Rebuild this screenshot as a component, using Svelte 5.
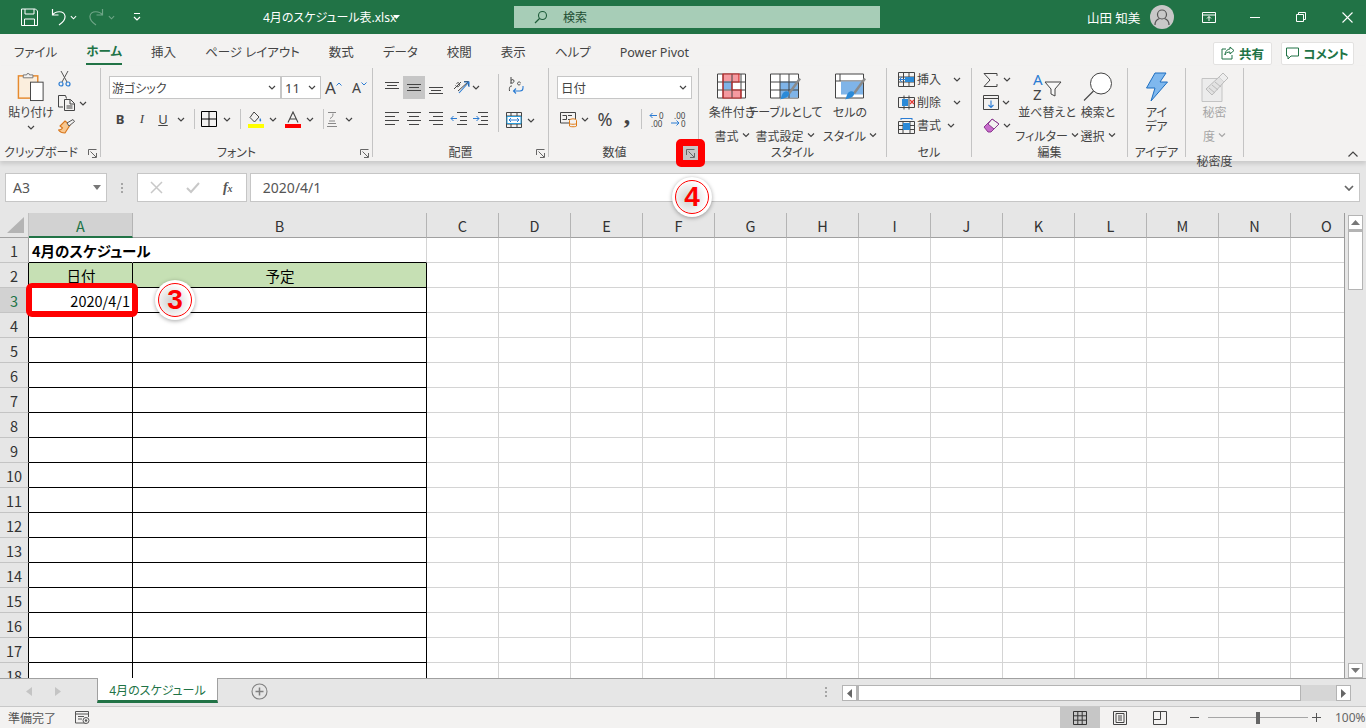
<script>
	const columns = ["A", "B", "C", "D", "E", "F", "G", "H", "I", "J", "K", "L", "M", "N", "O"]
	const rows = Array.from({ length: 18 }, (_, i) => i + 1)
	const tabs = ["ファイル", "ホーム", "挿入", "ページ レイアウト", "数式", "データ", "校閲", "表示", "ヘルプ", "Power Pivot"]

	function cellClass(row, col) {
		let names = "cell"
		if (col < 2) {
			if (row == 1) names += col == 0 ? " noright blackbottom" : " blackbottom"
			else names += " black"
		}
		if (row == 2 && col < 2) names += " head"
		return names
	}

	function cellText(row, col) {
		if (row == 1 && col == 0) return "4月のスケジュール"
		if (row == 2 && col == 0) return "日付"
		if (row == 2 && col == 1) return "予定"
		if (row == 3 && col == 0) return "2020/4/1"
		return ""
	}
</script>

{#snippet chev(cls = "")}
	<svg class="chev {cls}" width="8" height="5" viewBox="0 0 8 5"><path d="M1 1l3 3 3-3" fill="none" stroke="currentColor" stroke-width="1.2"/></svg>
{/snippet}

{#snippet launcher()}
	<svg width="9" height="9" viewBox="0 0 9 9"><path d="M.5 6V.5H8.500M2.500 2.500l5.500 5.500M8.500 4v4.500H4" fill="none" stroke="#666" stroke-width="1"/></svg>
{/snippet}

{#snippet lines(rowsOf)}
	<svg width="14" height="15" viewBox="0 0 14 15">
		{#each rowsOf as l}
			<path d="M{l[0]} {l[2]}.5H{l[1]}" stroke="#444" stroke-width="1"/>
		{/each}
	</svg>
{/snippet}

{#snippet launcherRow(title, cls = "")}
	<div class="glabel {cls}"><span>{title}</span><span class="launch">{@render launcher()}</span></div>
{/snippet}

<div class="app">
	<header class="titlebar">
		<svg class="save" width="17" height="18" viewBox="0 0 17 18"><path d="M.5 1h14l2 2v14.500H.500zM4 1v5h9V1M3.500 17.500V11h10v6.500" fill="none" stroke="#fff"/></svg>
		<svg class="undo" width="15" height="18" viewBox="0 0 15 18"><path d="M1.500 1v6h6M1.500 7C4 3 13 2 14 8c.5 4-3 7-6 9" fill="none" stroke="#fff" stroke-width="1.200"/></svg>
		{@render chev("tchev")}
		<svg class="redo" width="15" height="18" viewBox="0 0 15 18"><path d="M13.500 1v6h-6M13.500 7C11 3 2 2 1 8c-.5 4 3 7 6 9" fill="none" stroke="#6fa587" stroke-width="1.200"/></svg>
		{@render chev("tchev dim")}
		<svg class="qat" width="8" height="8" viewBox="0 0 8 8"><path d="M1 .5h6M1 4l3 3 3-3" fill="none" stroke="#fff" stroke-width="1.200"/></svg>
		<span class="doc">4月のスケジュール表.xlsx</span>
		<svg class="docchev" width="7" height="4" viewBox="0 0 7 4"><path d="M0 0h7L3.500 4z" fill="#fff"/></svg>
		<div class="search">
			<svg width="14" height="14" viewBox="0 0 14 14"><circle cx="8.500" cy="5.500" r="4" fill="none" stroke="#1e5c3a" stroke-width="1.100"/><path d="M5.500 8.500L1 13" stroke="#1e5c3a" stroke-width="1.200"/></svg>
			<span>検索</span>
		</div>
		<span class="user">山田 知美</span>
		<svg class="avatar" width="24" height="24" viewBox="0 0 24 24"><circle cx="12" cy="12" r="12" fill="#c8c8c8"/><circle cx="12" cy="9.500" r="4.500" fill="none" stroke="#555" stroke-width="1.200"/><path d="M5 20c0-4 3-6 4.500-6.500M19 20c0-4-3-6-4.500-6.500" fill="none" stroke="#555" stroke-width="1.200"/></svg>
		<svg class="display" width="14" height="11" viewBox="0 0 14 11"><path d="M.5.500h13v10H.5zM.5 3h13M7 9V4.500M5 6.500l2-2 2 2" fill="none" stroke="#fff"/></svg>
		<svg class="winmin" width="10" height="1" viewBox="0 0 10 1"><path d="M0 .5h10" stroke="#fff"/></svg>
		<svg class="winmax" width="10" height="10" viewBox="0 0 10 10"><path d="M.5 2.500h7v7h-7zM2.500 2.500v-2h7v7h-2" fill="none" stroke="#fff"/></svg>
		<svg class="winclose" width="11" height="11" viewBox="0 0 11 11"><path d="M.5.500l10 10M10.500.500l-10 10" stroke="#fff" stroke-width="1.100"/></svg>
	</header>

	<nav class="tabs">
		{#each tabs as tab, i}
			<span class="tab" class:active={i == 1}>{tab}</span>
		{/each}
		<button class="sharebtn share">
			<svg width="14" height="14" viewBox="0 0 14 14"><path d="M9 1l4 3.500L9 8V6C6 6 4.500 7 4 9 4 6 6 3 9 3zM5 3H1v10h10V9" fill="none" stroke="#217346"/></svg>
			共有
		</button>
		<button class="sharebtn comment">
			<svg width="13" height="13" viewBox="0 0 13 13"><path d="M.5 1h12v8H5l-3 3V9H.5z" fill="none" stroke="#217346"/></svg>
			コメント
		</button>
	</nav>

	<section class="ribbon">
		<div class="group g-clip">
			<div class="body clipbody">
				<div class="big paste">
					<svg width="28" height="31" viewBox="0 0 28 31">
						<rect x="1" y="4" width="20" height="23" fill="#fbeedd" stroke="#e68a2e" stroke-width="1.500"/>
						<path d="M6 6V3h3.500a1.500 1.500 0 0 1 3 0H16v3z" fill="#f3f2f1" stroke="#777"/>
						<rect x="13.500" y="10.500" width="13" height="19" fill="#fff" stroke="#444"/>
					</svg>
					<span class="t">貼り付け</span>
					{@render chev("undertext")}
				</div>
				<div class="smalls">
					<svg width="13" height="16" viewBox="0 0 13 16"><path d="M3 0l6 11M10 0L4 11" stroke="#555"/><circle cx="3" cy="13" r="2" fill="none" stroke="#2b7cd3" stroke-width="1.200"/><circle cx="10" cy="13" r="2" fill="none" stroke="#2b7cd3" stroke-width="1.200"/></svg>
					<div class="iconrow">
						<svg width="17" height="16" viewBox="0 0 17 16"><path d="M5 12H.5V.5h7l1 3M6.500 4.500h6l4 4v7h-10zM12 4.500V9h4.500M8.500 11h6M8.500 13h6" fill="none" stroke="#444"/></svg>
						{@render chev("copychev")}
					</div>
					<svg width="17" height="16" viewBox="0 0 17 16"><path d="M7 2l5 4-5 8c-2 0-5-1-6.500-3 2 0 3.500-1 4-2L2 7z" fill="#f8c78f" stroke="#d8761c" stroke-width="1.100"/><path d="M9 4l6-3.500 1.500 2L11 7z" fill="#f3f2f1" stroke="#555"/></svg>
				</div>
			</div>
			{@render launcherRow("クリップボード", "clipl")}
		</div>

		<div class="group g-font">
			<div class="body pad">
				<div class="rowtop">
					<div class="combo fontname"><span>游ゴシック</span>{@render chev()}</div>
					<div class="combo fontsize"><span>11</span>{@render chev()}</div>
					<span class="grow up">A<svg width="6" height="4" viewBox="0 0 6 4"><path d="M.5 3.500L3 1l2.500 2.500" fill="none" stroke="#2b7cd3"/></svg></span>
					<span class="grow down">A<svg width="6" height="4" viewBox="0 0 6 4"><path d="M.5.500L3 3 5.500.5" fill="none" stroke="#2b7cd3"/></svg></span>
				</div>
				<div class="rowbottom">
					<span class="btn w22 bold">B</span>
					<span class="btn w22 ital">I</span>
					<span class="btn w20 under">U</span>
					<span class="btn w16">{@render chev()}</span>
					<i class="sep s5"></i>
					<span class="btn w18"><svg width="16" height="16" viewBox="0 0 16 16"><path d="M.5.500h15v15H.5zM8 .5v15M.5 8h15" fill="none" stroke="#000"/></svg></span>
					<span class="btn w18">{@render chev()}</span>
					<i class="sep s4"></i>
					<span class="btn w16"><svg width="16" height="17" viewBox="0 0 16 17"><path d="M6 1l5 5-4.500 5L2 6.500z" fill="none" stroke="#444"/><path d="M12 7c1.500 1.500 1.500 3 .5 3.500S11 9 12 7z" fill="#2b7cd3"/><rect y="13" width="16" height="4" fill="#ffff00"/></svg></span>
					<span class="btn w18">{@render chev()}</span>
					<span class="btn w16 m3"><svg width="16" height="17" viewBox="0 0 16 17"><path d="M3 11.500L8 1l5 10.500M4.500 8h7" fill="none" stroke="#444" stroke-width="1.100"/><rect y="13" width="16" height="4" fill="#ff0000"/></svg></span>
					<span class="btn w18">{@render chev()}</span>
					<i class="sep s4b"></i>
					<span class="btn w16"><svg width="14" height="17" viewBox="0 0 14 17"><path d="M3 1.500h8M8 2.500c0 3-1 4-3 5M4 10h6M3 12.500h8M2 15.500h10" fill="none" stroke="#888"/></svg></span>
					<span class="btn w18">{@render chev()}</span>
				</div>
			</div>
			{@render launcherRow("フォント")}
		</div>

		<div class="group g-align">
			<div class="body pad split">
				<div class="alignleft">
					<div class="rowtop cells">
						<span class="btn w22 tall">{@render lines([[0, 14, 2], [2, 12, 5], [0, 14, 8]])}</span>
						<span class="btn w22 tall on">{@render lines([[0, 14, 4], [2, 12, 7], [0, 14, 10]])}</span>
						<span class="btn w22 tall">{@render lines([[0, 14, 7], [2, 12, 10], [0, 14, 13]])}</span>
						<span class="btn orient"><svg width="17" height="17" viewBox="0 0 17 17"><path d="M1 10l7-7M3.500 4.500c1-1 2.500-1 3 0s0 2.500-1 3-2.500 0-3-1M5 12l10-9M11 2.500h4.500V7" fill="none" stroke="#444"/><path d="M6 14L16 3M11 3h5v5" fill="none" stroke="#2b7cd3" stroke-width="1.100"/></svg></span>
						<span class="btn w12">{@render chev()}</span>
					</div>
					<div class="rowbottom">
						<span class="btn w22">{@render lines([[0, 14, 0], [0, 10, 4], [0, 14, 8], [0, 10, 12]])}</span>
						<span class="btn w22">{@render lines([[0, 14, 0], [2, 12, 4], [0, 14, 8], [2, 12, 12]])}</span>
						<span class="btn w22">{@render lines([[0, 14, 0], [4, 14, 4], [0, 14, 8], [4, 14, 12]])}</span>
						<span class="btn w22"><svg width="17" height="15" viewBox="0 0 17 15"><path d="M7 .5h10M10 4.500h7M10 8.500h7M7 12.500h10" stroke="#444" fill="none"/><path d="M7 6.500H1M3.500 4L1 6.500 3.500 9" stroke="#2b7cd3" fill="none"/></svg></span>
						<span class="btn w22"><svg width="15" height="15" viewBox="0 0 15 15"><path d="M5 .5h10M8 4.500h7M8 8.500h7M5 12.500h10" stroke="#444" fill="none"/><path d="M0 6.500h6M3.500 4L6 6.500 3.500 9" stroke="#2b7cd3" fill="none"/></svg></span>
					</div>
				</div>
				<i class="sep tall58"></i>
				<div class="alignright">
					<span class="wrap"><svg width="16" height="19" viewBox="0 0 16 19"><path d="M3 8V1M3 4.500c1-1.500 3-1 3 .5S4 8 3 6.500M12.500 6.500c-1-1-3-.5-3 1s2 2 3 .5" fill="none" stroke="#444"/><path d="M1.500 15C1 11 2 10 4 10" fill="none" stroke="#444"/><path d="M15 10v2c0 2-1 3-3 3H6M8 12.500L5.500 15 8 17.500" fill="none" stroke="#2b7cd3" stroke-width="1.100"/></svg></span>
					<div class="mergerow">
						<svg width="16" height="16" viewBox="0 0 16 16"><path d="M.5.500h15v15H.5zM.5 4h15M.5 12h15M5 .5V4M11 .5V4M5 12v3.500M11 12v3.500" fill="none" stroke="#444"/><rect x="1" y="4.500" width="14" height="7" fill="#fff"/><path d="M1 4.500h14v7H1z" fill="none" stroke="#2b9bd8"/><path d="M3 8h10M5 6L3 8l2 2M11 6l2 2-2 2" fill="none" stroke="#2b7cd3"/></svg>
						<span class="btn w18">{@render chev()}</span>
					</div>
				</div>
			</div>
			{@render launcherRow("配置")}
		</div>

		<div class="group g-num">
			<div class="body pad">
				<div class="rowtop">
					<div class="combo numformat"><span>日付</span>{@render chev()}</div>
				</div>
				<div class="rowbottom">
					<span class="btn w17 m3"><svg width="17" height="17" viewBox="0 0 17 17"><path d="M.5 1.500h15V12H.5z" fill="none" stroke="#444"/><path d="M2.500 4.500h4v4h-4M8 4.500h4M8 8.500h4" fill="none" stroke="#444"/><ellipse cx="13" cy="9.500" rx="3.500" ry="1.700" fill="#f3f2f1" stroke="#e07b16"/><path d="M9.500 9.500v5.500c0 1 7 1 7 0V9.500M9.500 12.500c0 1 7 1 7 0" fill="#f3f2f1" stroke="#e07b16"/></svg></span>
					<span class="btn w16">{@render chev()}</span>
					<span class="btn w18 m3 pct">%</span>
					<span class="btn w18 m4 comma">,</span>
					<i class="sep s6"></i>
					<span class="btn w16 m7"><svg width="16" height="15" viewBox="0 0 16 15"><path d="M8 3.500H1M3.500 1L1 3.500 3.500 6" fill="none" stroke="#2b7cd3"/><text x="10" y="7" class="sv">0</text><text x="2" y="14.500" class="sv">.00</text></svg></span>
					<span class="btn w17 m6"><svg width="17" height="15" viewBox="0 0 17 15"><text x="3" y="7" class="sv">.00</text><text x="10" y="14.500" class="sv">0</text><path d="M0 11h8M5.500 8.500L8 11l-2.500 2.500" fill="none" stroke="#2b7cd3"/></svg></span>
				</div>
			</div>
			<div class="glabel numl"><span>数値</span></div>
		</div>

		<div class="group g-style">
			<div class="body stylebody">
				<div class="big w50">
					<svg width="30" height="27" viewBox="0 0 30 27">
						<path d="M.5.500h28v24H.5z" fill="#fff" stroke="#444"/>
						<rect x="6" y="1" width="16" height="7" fill="#f59aa0"/><rect x="6" y="8" width="9" height="8" fill="#7fb4e8"/><rect x="6" y="17" width="18" height="7" fill="#f59aa0"/>
						<path d="M6 .5v24M15 .5v24M24 .5v24M.5 8.500h28M.5 16.500h28" stroke="#444" fill="none"/>
						<path d="M6 .5h16v8H15v8h9v8H6z" fill="none" stroke="#c22" stroke-width="1.100"/>
					</svg>
					<span class="t tl1">条件付き</span>
					<span class="t">書式{@render chev("inl")}</span>
				</div>
				<div class="big w56">
					<svg width="31" height="27" viewBox="0 0 31 27">
						<path d="M.5.500h28v24H.5z" fill="#fff" stroke="#444"/>
						<rect x="10" y="8" width="18" height="16" fill="#7fb4e8"/>
						<path d="M10 .5v24M19 .5v24M.5 8.500h28M.5 16.500h28" stroke="#444" fill="none"/>
						<path d="M30 5L19 20" stroke="#8a8a8a" stroke-width="2.500"/><path d="M15 18c3-1 5 1 4 3-1 3-5 4-9 5 2-2 1-6 5-8z" fill="#2b8ad8"/>
					</svg>
					<span class="t tl1">テーブルとして</span>
					<span class="t">書式設定{@render chev("inl")}</span>
				</div>
				<div class="big w58">
					<svg width="31" height="27" viewBox="0 0 31 27">
						<path d="M.5.500h28v24H.5z" fill="#fff" stroke="#444"/>
						<path d="M.5 7.500h28M5 .5v7" stroke="#444" fill="none"/>
						<rect x="6" y="8" width="22" height="13" fill="#7fb4e8"/>
						<path d="M30 5L19 20" stroke="#8a8a8a" stroke-width="2.500"/><path d="M15 18c3-1 5 1 4 3-1 3-5 4-9 5 2-2 1-6 5-8z" fill="#2b8ad8"/>
					</svg>
					<span class="t tl1">セルの</span>
					<span class="t">スタイル{@render chev("inl")}</span>
				</div>
			</div>
			<div class="glabel"><span>スタイル</span></div>
		</div>

		<div class="group g-cell">
			<div class="body stack cellbody">
				<div class="line">
					<svg width="17" height="15" viewBox="0 0 17 15"><path d="M.5.500h16v14H.5zM.5 5h16M.5 10h16M5.500.5v14M11 .5v14" fill="none" stroke="#444"/><rect x="7" y="5" width="9" height="5" fill="#2b8ad8"/><path d="M7 7.500H1.500M4 5L1.500 7.500 4 10" fill="none" stroke="#2b7cd3"/></svg>
					<span class="t">挿入</span>{@render chev("cellchev")}
				</div>
				<div class="line">
					<svg width="17" height="15" viewBox="0 0 17 15"><path d="M.5 2.500h16v10H.5zM6 .5v14M11 .5v14" fill="none" stroke="#444"/><rect x="4" y="4" width="6" height="7" fill="#2b8ad8"/><path d="M12 5l4 4M16 5l-4 4" stroke="#e53935" stroke-width="1.200"/></svg>
					<span class="t">削除</span>{@render chev("cellchev")}
				</div>
				<div class="line">
					<svg width="17" height="16" viewBox="0 0 17 16"><path d="M.5 3.500h16v12H.5zM.5 7.500h16M.5 11.500h16M5 3.500v12M12 3.500v12" fill="none" stroke="#444"/><rect x="5" y="5" width="7" height="7" fill="#2b8ad8"/><path d="M3 .5h11M3 0v2M14 0v2" stroke="#2b7cd3"/></svg>
					<span class="t">書式</span>{@render chev("cellchev short")}
				</div>
			</div>
			<div class="glabel"><span>セル</span></div>
		</div>

		<div class="group g-edit">
			<div class="body editbody">
				<div class="stack editleft">
					<div class="line"><svg width="15" height="14" viewBox="0 0 15 14"><path d="M14 3V.5H1L7 7l-6 6.500h13V11" fill="none" stroke="#444"/></svg>{@render chev("e1")}</div>
					<div class="line"><svg width="16" height="15" viewBox="0 0 16 15"><path d="M.5.500h15v14H.5zM.5 3.500h15" fill="none" stroke="#444"/><path d="M8 5.500v7M5.500 10L8 12.500 10.500 10" fill="none" stroke="#2b7cd3" stroke-width="1.100"/></svg>{@render chev("e2")}</div>
					<div class="line"><svg width="17" height="15" viewBox="0 0 17 15"><path d="M1 9l8-8 7 5-8 8H5z" fill="#c86bcc" stroke="#8a3b8f"/><path d="M5 6l6 5 5-5-7-5z" fill="#f3f2f1" stroke="#8a3b8f"/></svg>{@render chev("e2")}</div>
				</div>
				<div class="big w58">
					<svg width="30" height="28" viewBox="0 0 30 28"><text x="1" y="12" class="az blue">A</text><text x="1" y="27" class="az">Z</text><path d="M13 9h16l-6 7v7l-4-2v-5z" fill="#f8f8f8" stroke="#444"/></svg>
					<span class="t tl1">並べ替えと</span>
					<span class="t">フィルター{@render chev("inl")}</span>
				</div>
				<div class="big w44">
					<svg width="30" height="29" viewBox="0 0 30 29"><circle cx="18" cy="11" r="10.500" fill="#fff" stroke="#444"/><path d="M10.500 18.500L1 28" stroke="#444" stroke-width="1.100"/></svg>
					<span class="t tl1">検索と</span>
					<span class="t">選択{@render chev("inl")}</span>
				</div>
			</div>
			<div class="glabel"><span>編集</span></div>
		</div>

		<div class="group g-idea">
			<div class="big w57">
				<svg width="22" height="29" viewBox="0 0 22 29"><path d="M9 .5h11l-6 9h7.500L5 28.500l4-13H.5z" fill="#7fb8ee" stroke="#1f6fc0"/></svg>
				<span class="t tl1">アイ</span>
				<span class="t">デア</span>
			</div>
			<div class="glabel"><span>アイデア</span></div>
		</div>

		<div class="group g-sens">
			<div class="big w57 muted">
				<svg width="28" height="30" viewBox="0 0 28 30"><path d="M1 6.500h20v23H1z" fill="#ececec" stroke="#c4c4c4"/><path d="M5 17L18 5l5 5-12 13z" fill="#e2e2e2" stroke="#bbb"/><path d="M18 5l4-4 5 5-4 4" fill="#eee" stroke="#bbb"/><path d="M8 16l6 5M11 13l6 5M14 10l6 5" stroke="#bbb"/></svg>
				<span class="t tl1">秘密</span>
				<span class="t">度{@render chev("inl")}</span>
			</div>
			<div class="glabel"><span>秘密度</span></div>
		</div>

		<svg class="collapse" width="10" height="6" viewBox="0 0 10 6"><path d="M.5 5.500L5 1l4.500 4.500" fill="none" stroke="#444" stroke-width="1.200"/></svg>
	</section>

	<section class="formula">
		<div class="namebox"><span>A3</span><svg width="8" height="5" viewBox="0 0 8 5"><path d="M0 0h8L4 5z" fill="#777"/></svg></div>
		<div class="grip"><i></i><i></i><i></i></div>
		<div class="fxbox">
			<svg width="13" height="13" viewBox="0 0 13 13"><path d="M1 1l11 11M12 1L1 12" stroke="#c8c8c8" stroke-width="1.500"/></svg>
			<svg width="14" height="12" viewBox="0 0 14 12"><path d="M1 6l4 4 8-9" fill="none" stroke="#c8c8c8" stroke-width="2"/></svg>
			<span class="fx">f<small>x</small></span>
		</div>
		<div class="input">
			<span>2020/4/1</span>
			<svg width="10" height="6" viewBox="0 0 10 6"><path d="M1 1l4 4 4-4" fill="none" stroke="#666" stroke-width="1.700"/></svg>
		</div>
	</section>

	<section class="sheet">
		<div class="gridwrap">
			<div class="grid">
				<div class="corner"><svg width="18" height="17" viewBox="0 0 18 17"><path d="M17 0v16H0z" fill="#b4b4b4"/></svg></div>
				{#each columns as col, i}
					<div class="colhead" class:picked={i == 0}>{col}</div>
				{/each}
				{#each rows as row}
					<div class="rowhead" class:picked={row == 3} class:blackedge={row > 1}>{row}</div>
					{#each columns as col, c}
						<div class={cellClass(row, c)} class:strong={row == 1 && c == 0} class:center={row == 2} class:right={row == 3 && c == 0}>{cellText(row, c)}</div>
					{/each}
				{/each}
			</div>
		</div>
		<aside class="vscroll">
			<span class="sbtn"><svg width="9" height="5" viewBox="0 0 9 5"><path d="M0 5h9L4.500 0z" fill="#777"/></svg></span>
			<span class="vthumb"></span>
			<span class="vrest"></span>
			<span class="sbtn"><svg width="9" height="5" viewBox="0 0 9 5"><path d="M0 0h9L4.500 5z" fill="#777"/></svg></span>
		</aside>
	</section>

	<section class="tabbar">
		<svg class="nav" width="6" height="9" viewBox="0 0 6 9"><path d="M6 0v9L0 4.500z" fill="#c4c4c4"/></svg>
		<svg class="nav next" width="6" height="9" viewBox="0 0 6 9"><path d="M0 0v9l6-4.500z" fill="#c4c4c4"/></svg>
		<div class="sheettab">4月のスケジュール</div>
		<svg class="plus" width="17" height="17" viewBox="0 0 17 17"><circle cx="8.500" cy="8.500" r="7.500" fill="none" stroke="#808080" stroke-width="1.100"/><path d="M8.500 4.500v8M4.500 8.500h8" stroke="#808080" stroke-width="1.500"/></svg>
		<div class="grip hgrip"><i></i><i></i><i></i></div>
		<div class="hscroll">
			<span class="hbtn"><svg width="5" height="9" viewBox="0 0 5 9"><path d="M5 0v9L0 4.500z" fill="#666"/></svg></span>
			<span class="hthumb"></span>
			<span class="hrest"></span>
			<span class="hbtn"><svg width="5" height="9" viewBox="0 0 5 9"><path d="M0 0v9l5-4.500z" fill="#666"/></svg></span>
		</div>
	</section>

	<footer class="status">
		<span class="ready">準備完了</span>
		<svg class="macro" width="15" height="13" viewBox="0 0 15 13"><path d="M11 12H.5V.5h13V6M.5 3h13M3 5.500h6M3 8h4" fill="none" stroke="#555"/><circle cx="11" cy="9.500" r="3" fill="#f3f2f1" stroke="#555"/><circle cx="11" cy="9.500" r="1.200" fill="#555"/></svg>
		<span class="view on"><svg width="14" height="14" viewBox="0 0 14 14"><path d="M.5.500h13v13H.5zM4.800.5v13M9.200.5v13M.5 4.800h13M.5 9.200h13" fill="none" stroke="#333"/></svg></span>
		<span class="view"><svg width="14" height="14" viewBox="0 0 14 14"><path d="M.5.500h13v13H.5zM3 2.500h8v9H3zM5 5h4M5 7h4M5 9h4" fill="none" stroke="#444"/></svg></span>
		<span class="view"><svg width="14" height="14" viewBox="0 0 14 14"><path d="M.5.500h13v13H.5zM.5 8.500h7V.5" fill="none" stroke="#444"/></svg></span>
		<svg class="zoomminus" width="9" height="1" viewBox="0 0 9 1"><path d="M0 .5h9" stroke="#555"/></svg>
		<div class="slider"><i></i></div>
		<svg class="zoomplus" width="9" height="9" viewBox="0 0 9 9"><path d="M0 4.500h9M4.500 0v9" stroke="#555"/></svg>
		<span class="percent">100%</span>
	</footer>

	<div class="redbox cellbox"></div>
	<div class="redbox launchbox">{@render launcher()}</div>
	<div class="badge b3"><span>3</span></div>
	<div class="badge b4"><span>4</span></div>
</div>

<style>
	:global(body) {
		margin: 0;
		overflow: hidden;
	}

	.app {
		position: relative;
		width: 1366px;
		height: 728px;
		overflow: hidden;
		display: flex;
		flex-direction: column;
		background: #f3f2f1;
		color: #444;
		font-family: "Noto Sans", "Noto Sans CJK JP", sans-serif;
		font-size: 12px;
		font-feature-settings: "palt";
	}

	svg {
		display: block;
		flex: none;
	}

	/* title bar */
	.titlebar {
		height: 34px;
		flex: none;
		background: #217346;
		color: #fff;
		display: flex;
		align-items: center;
	}
	.save { margin-left: 21px; }
	.undo { margin-left: 13px; }
	.redo { margin-left: 12px; }
	.tchev { margin-left: 4px; width: 7px; color: #fff; }
	.tchev.dim { color: #6fa587; }
	.redo + .tchev { margin-left: 4px; }
	.qat { margin-left: 18px; }
	.doc {
		margin-left: 122px;
		width: 128px;
		white-space: nowrap;
		font-size: 12px;
	}
	.docchev { margin-left: 2px; }
	.search {
		margin-left: 114px;
		width: 366px;
		height: 22px;
		box-sizing: border-box;
		padding-left: 20px;
		background: #a7cdb7;
		color: #1e4d33;
		display: flex;
		align-items: center;
		gap: 15px;
		font-size: 12px;
	}
	.user {
		margin-left: 207px;
		width: 54px;
		white-space: nowrap;
		font-size: 12.500px;
	}
	.avatar { margin-left: 9px; }
	.display { margin-left: 28px; }
	.winmin { margin-left: 34px; }
	.winmax { margin-left: 36px; }
	.winclose { margin-left: 36px; }

	/* tab row */
	.tabs {
		height: 32px;
		flex: none;
		display: flex;
		align-items: center;
		padding-left: 14px;
		padding-top: 0;
		font-size: 12.500px;
		color: #444;
	}
	.tab {
		margin-right: 29px;
		white-space: nowrap;
		height: 24px;
		line-height: 30px;
		position: relative;
	}
	.tab.active {
		font-weight: 700;
		color: #217346;
	}
	.tab.active {
		border-bottom: 2px solid #217346;
		height: 25px;
		margin-top: 3px;
		line-height: 27px;
	}
	.sharebtn {
		height: 23px;
		box-sizing: border-box;
		border: 1px solid #e3e2e1;
		border-radius: 2px;
		background: #fff;
		color: #217346;
		font: inherit;
		font-weight: 700;
		font-size: 12.500px;
		display: flex;
		align-items: center;
		justify-content: center;
		gap: 4px;
		padding: 0;
		white-space: nowrap;
	}
	.share {
		width: 59px;
		margin-left: auto;
		margin-top: 6px;
	}
	.comment {
		width: 73px;
		margin-left: 9px;
		margin-right: 12px;
		margin-top: 6px;
	}

	/* ribbon */
	.ribbon {
		height: 95px;
		flex: none;
		display: flex;
		align-items: flex-start;
		padding-top: 2px;
		box-sizing: border-box;
		position: relative;
		z-index: 1;
		box-shadow: 0 3px 4px rgba(0, 0, 0, 0.12);
	}
	.group {
		height: 89px;
		box-sizing: border-box;
		border-right: 1px solid #c4c4c4;
		display: flex;
		flex-direction: column;
		flex: none;
		position: relative;
	}
	.g-clip { width: 101px; }
	.g-font { width: 272px; }
	.g-align { width: 176px; }
	.g-num { width: 150px; }
	.g-style { width: 188px; }
	.g-cell { width: 85px; }
	.g-edit { width: 156px; }
	.g-idea { width: 58px; }
	.g-sens { width: 58px; }

	.body {
		flex: 1;
		min-height: 0;
	}
	.glabel {
		height: 16px;
		margin-bottom: -4px;
		line-height: 16px;
		text-align: center;
		font-size: 12px;
		position: relative;
		white-space: nowrap;
		flex: none;
	}
	.launch {
		position: absolute;
		right: 3px;
		top: 4px;
	}
	.clipl {
		padding-right: 18px;
	}
	.g-idea .big, .g-sens .big { flex: 1; }

	.t {
		line-height: 14px;
		font-size: 12px;
		white-space: nowrap;
		display: inline-flex;
		align-items: center;
		gap: 3px;
	}
	.big {
		display: flex;
		flex-direction: column;
		align-items: center;
		padding-top: 4px;
		box-sizing: border-box;
		flex: none;
	}
	.big svg:first-child {
		height: 30px;
		margin-bottom: 4px;
	}
	.w44 { width: 44px; }
	.w50 { width: 50px; }
	.w56 { width: 56px; }
	.w57 { width: 57px; }
	.w58 { width: 58px; }
	.muted { color: #a6a6a6; }

	.clipbody {
		display: flex;
		padding-left: 10px;
	}
	.paste { width: 42px; }
	.undertext { margin-top: 5px; }
	.smalls {
		margin-left: 6px;
		padding-top: 3px;
		display: flex;
		flex-direction: column;
		gap: 8px;
	}
	.iconrow {
		display: flex;
		align-items: center;
	}
	.copychev { margin-left: 4px; }

	.pad { padding-left: 8px; }
	.rowtop {
		margin-top: 8px;
		display: flex;
		align-items: center;
		height: 23px;
	}
	.rowbottom {
		margin-top: 10px;
		display: flex;
		align-items: center;
		height: 20px;
	}
	.combo {
		height: 23px;
		box-sizing: border-box;
		border: 1px solid #c6c6c6;
		background: #fff;
		display: flex;
		align-items: center;
		justify-content: space-between;
		padding: 0 4px 0 2px;
		font-size: 12px;
	}
	.fontname { width: 172px; }
	.fontsize { width: 40px; font-size: 13px; padding-left: 3px; }
	.numformat { width: 135px; font-size: 12.500px; padding-left: 3px; }
	.grow {
		display: flex;
		align-items: flex-start;
		font-size: 16px;
		line-height: 20px;
	}
	.grow svg { margin-top: 4px; }
	.up { margin-left: 4px; font-size: 17px; }
	.down { margin-left: 10px; font-size: 14px; }

	.btn {
		display: flex;
		align-items: center;
		justify-content: center;
		height: 20px;
		flex: none;
	}
	.w12 { width: 12px; }
	.w16 { width: 16px; }
	.w17 { width: 17px; }
	.w18 { width: 18px; }
	.w20 { width: 20px; }
	.w22 { width: 22px; }
	.m3 { margin-left: 3px; }
	.m4 { margin-left: 4px; }
	.m6 { margin-left: 6px; }
	.m7 { margin-left: 7px; }
	.bold { font-weight: 700; font-size: 13px; }
	.ital { font-style: italic; font-size: 13px; font-family: "Liberation Serif", serif; }
	.under { text-decoration: underline; font-size: 13px; }
	.pct { font-size: 18px; }
	.comma {
		font-size: 26px;
		font-weight: 700;
		line-height: 14px;
		align-items: flex-start;
		font-family: "Liberation Serif", serif;
	}

	.sep {
		display: block;
		width: 1px;
		height: 20px;
		background: #c4c4c4;
		flex: none;
	}
	.s5 { margin: 0 5px; }
	.s4 { margin: 0 7px 0 4px; }
	.s4b { margin: 0 0 0 4px; }
	.s6 { margin-left: 5px; }
	.tall58 { height: 58px; margin-top: 6px; }

	.split { display: flex; }
	.alignleft { width: 117px; flex: none; }
	.cells .tall { height: 23px; }
	.on { background: #c6c6c6; }
	.orient { margin-left: 6px; width: 17px; }
	.alignright {
		padding-top: 8px;
		display: flex;
		flex-direction: column;
	}
	.wrap { margin-left: 9px; }
	.mergerow {
		display: flex;
		align-items: center;
		margin-left: 7px;
		margin-top: 15px;
	}

	.numl { padding-right: 18px; }

	.stylebody {
		display: flex;
		padding-left: 8px;
	}
	.w56 + .w58 { margin-left: 8px; }

	.stack {
		display: flex;
		flex-direction: column;
	}
	.cellbody { padding-left: 11px; }
	.line {
		height: 23px;
		display: flex;
		align-items: center;
	}
	.line .t { margin-left: 2px; }
	.cellchev { margin-left: 12px; }
	.cellchev.short { margin-left: 6px; }

	.editbody {
		display: flex;
		padding-left: 11px;
	}
	.editleft { width: 35px; flex: none; }
	.e1 { margin-left: 5px; }
	.e2 { margin-left: 3px; }
	.az {
		font-size: 15px;
		fill: #444;
		font-family: "Noto Sans", sans-serif;
	}
	.blue { fill: #2b7cd3; }
	.sv {
		font-size: 8px;
		fill: #444;
		font-family: "Noto Sans", sans-serif;
	}

	.collapse {
		position: absolute;
		left: 1348px;
		top: 85px;
	}

	/* formula bar */
	.formula {
		height: 52px;
		flex: none;
		box-sizing: border-box;
		padding: 12px 6px 11px 5px;
		background: #e6e6e6;
		display: flex;
		align-items: stretch;
	}
	.namebox, .fxbox, .input {
		background: #fff;
		border: 1px solid #c6c6c6;
		box-sizing: border-box;
		display: flex;
		align-items: center;
	}
	.namebox {
		width: 102px;
		justify-content: space-between;
		padding: 0 5px 0 7px;
		font-size: 14px;
		color: #555;
	}
	.grip {
		width: 30px;
		display: flex;
		flex-direction: column;
		align-items: center;
		justify-content: center;
		gap: 2px;
	}
	.grip i {
		width: 2px;
		height: 2px;
		background: #a6a6a6;
	}
	.fxbox {
		width: 110px;
		padding-left: 12px;
	}
	.fxbox svg:nth-child(2) { margin-left: 23px; }
	.fx {
		margin-left: 23px;
		font-family: "Liberation Serif", serif;
		font-style: italic;
		font-weight: 700;
		font-size: 14px;
		color: #555;
	}
	.fx small { font-size: 10px; }
	.input {
		width: 1111px;
		margin-left: 3px;
		padding: 0 5px 0 12px;
		justify-content: space-between;
		font-size: 14px;
		color: #555;
	}

	/* sheet */
	.sheet {
		height: 465px;
		flex: none;
		display: flex;
		background: #e6e6e6;
	}
	.gridwrap {
		width: 1345px;
		box-sizing: border-box;
		overflow: hidden;
		border-right: 1px solid #9c9c9c;
		flex: none;
	}
	.grid {
		display: grid;
		grid-template-columns: 29px 104px 294px repeat(13, 72px);
		grid-auto-rows: 25px;
		background: #fff;
		color: #000;
		font-family: "Noto Sans CJK JP", sans-serif;
		font-size: 14.500px;
	}
	.corner {
		background: #e6e6e6;
		border-right: 1px solid #c0c0c0;
		border-bottom: 1px solid #a0a0a0;
		box-sizing: border-box;
		display: flex;
		align-items: flex-end;
		justify-content: flex-end;
		padding: 0 3px 3px 0;
	}
	.colhead {
		background: #e6e6e6;
		border-right: 1px solid #b4b4b4;
		border-bottom: 1px solid #a0a0a0;
		box-sizing: border-box;
		display: flex;
		align-items: center;
		justify-content: center;
		padding-top: 1px;
		color: #333;
	}
	.colhead.picked {
		background: #d2d2d2;
		border-bottom: 2px solid #217346;
		color: #217346;
	}
	.rowhead {
		background: #e6e6e6;
		border-right: 1px solid #a0a0a0;
		border-bottom: 1px solid #c4c4c4;
		box-sizing: border-box;
		display: flex;
		align-items: center;
		justify-content: center;
		color: #333;
	}
	.rowhead.picked {
		background: #d2d2d2;
		color: #217346;
	}
	.rowhead.blackedge { border-right-color: #000; }
	.cell {
		border-right: 1px solid #d4d4d4;
		border-bottom: 1px solid #d4d4d4;
		box-sizing: border-box;
		display: flex;
		align-items: center;
		padding: 0 2px 0 3px;
		white-space: nowrap;
		min-width: 0;
	}
	.noright { border-right-color: #fff; }
	.blackbottom { border-bottom-color: #000; }
	.black {
		border-right-color: #000;
		border-bottom-color: #000;
	}
	.head { background: #c6e0b4; }
	.strong { font-weight: 700; }
	.center { justify-content: center; }
	.right { justify-content: flex-end; }

	.vscroll {
		width: 21px;
		flex: none;
		box-sizing: border-box;
		padding: 2px 3px 0 3px;
		display: flex;
		flex-direction: column;
	}
	.sbtn {
		height: 15px;
		flex: none;
		background: #fff;
		border: 1px solid #b4b4b4;
		box-sizing: border-box;
		display: flex;
		align-items: center;
		justify-content: center;
	}
	.vthumb {
		height: 60px;
		flex: none;
		background: #fff;
		border: 1px solid #b4b4b4;
		border-top-width: 2px;
		box-sizing: border-box;
	}
	.vrest {
		flex: 1;
		background: #e6e6e6;
	}

	/* sheet tabs */
	.tabbar {
		height: 28px;
		flex: none;
		box-sizing: border-box;
		background: #e6e6e6;
		border-top: 1px solid #a0a0a0;
		display: flex;
		align-items: flex-start;
		position: relative;
	}
	.nav { margin: 8px 0 0 26px; }
	.nav.next { margin-left: 23px; }
	.sheettab {
		width: 121px;
		height: 25px;
		margin: -1px 0 0 36px;
		box-sizing: border-box;
		background: #fff;
		border: 1px solid #a0a0a0;
		border-top: 0;
		border-bottom: 3px solid #217346;
		color: #217346;
		text-align: center;
		line-height: 25px;
		font-size: 12px;
	}
	.plus { margin: 4px 0 0 33px; }
	.hgrip {
		margin: 8px 0 0 541px;
		width: 33px;
		padding-right: 0;
	}
	.hscroll {
		width: 509px;
		height: 16px;
		margin-top: 6px;
		display: flex;
		background: #e6e6e6;
	}
	.hbtn {
		width: 15px;
		background: #fff;
		border: 1px solid #b4b4b4;
		box-sizing: border-box;
		display: flex;
		align-items: center;
		justify-content: center;
		flex: none;
	}
	.hthumb {
		width: 444px;
		background: #fff;
		border: 1px solid #b4b4b4;
		border-left-width: 2px;
		box-sizing: border-box;
		flex: none;
	}
	.hrest {
		flex: 1;
		background: #d6d6d6;
	}

	/* status bar */
	.status {
		flex: 1;
		box-sizing: border-box;
		border-top: 1px solid #c8c8c8;
		display: flex;
		align-items: center;
		font-size: 12px;
	}
	.ready {
		margin-left: 8px;
		width: 48px;
		white-space: nowrap;
		color: #555;
	}
	.macro { margin-left: 19px; }
	.view {
		width: 40px;
		height: 100%;
		display: flex;
		align-items: center;
		justify-content: center;
		flex: none;
	}
	.view.on {
		margin-left: 970px;
		background: #c6c6c6;
	}
	.zoomminus { margin-left: 10px; }
	.slider {
		width: 100px;
		height: 1px;
		margin-left: 9px;
		background: #a6a6a6;
		display: flex;
		align-items: center;
		justify-content: center;
	}
	.slider i {
		width: 4px;
		height: 12px;
		background: #666;
	}
	.zoomplus { margin-left: 4px; }
	.percent {
		margin-left: 14px;
		color: #666;
		font-size: 12px;
	}

	/* annotations */
	.redbox {
		position: absolute;
		box-sizing: border-box;
		z-index: 3;
	}
	.cellbox {
		left: 26px;
		top: 283px;
		width: 112px;
		height: 34px;
		border: 6px solid #f00;
		border-top-width: 5px;
		border-radius: 6px;
	}
	.launchbox {
		left: 676px;
		top: 139px;
		width: 29px;
		height: 28px;
		border: 7px solid #f00;
		border-radius: 5px;
		background: #c6c6c6;
		display: flex;
		align-items: center;
		justify-content: center;
	}
	.badge {
		position: absolute;
		z-index: 3;
		width: 40px;
		height: 40px;
		box-sizing: border-box;
		border-radius: 50%;
		background: #fff;
		box-shadow: 0 1px 4px rgba(0, 0, 0, 0.35);
		display: flex;
		align-items: center;
		justify-content: center;
	}
	.badge span {
		width: 34px;
		height: 34px;
		box-sizing: border-box;
		border: 1px solid #f00;
		border-radius: 50%;
		background: radial-gradient(circle at 40% 55%, #cfcfcf 0, #fff 70%);
		color: #f00;
		font-family: "Liberation Sans", sans-serif;
		font-weight: 700;
		font-size: 28px;
		line-height: 32px;
		text-align: center;
		display: block;
	}
	.b3 { left: 155px; top: 280px; }
	.b4 { left: 672px; top: 177px; }
</style>
